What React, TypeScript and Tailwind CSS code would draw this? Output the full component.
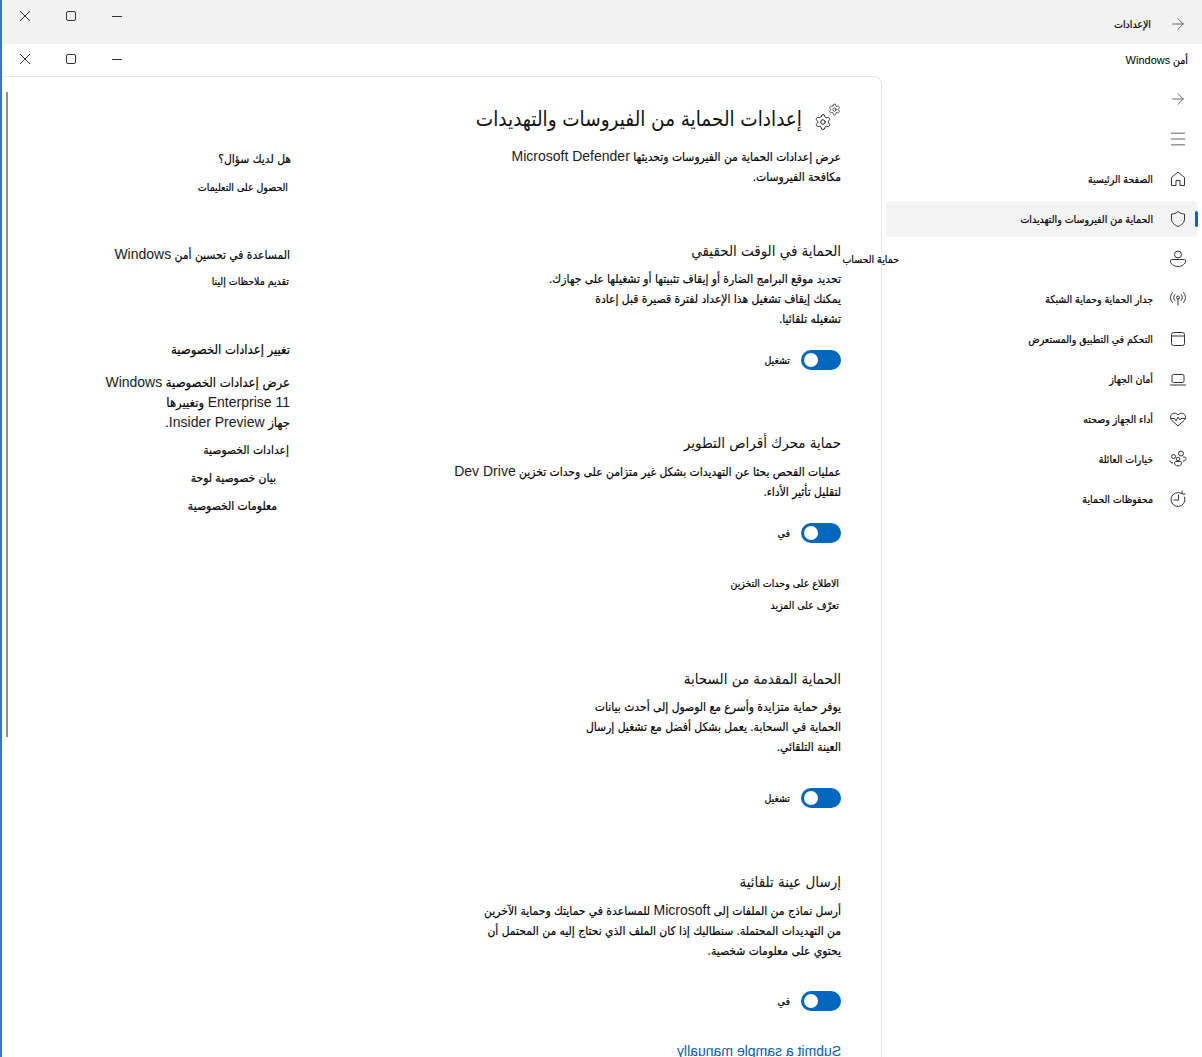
import React, { ReactNode } from 'react';
import { ArrowRight, Menu, Settings } from 'lucide-react';

const sans = 'font-["Liberation_Sans","DejaVu_Sans_Condensed",sans-serif]';
const small = 'text-[10.5px] leading-5 text-black [-webkit-text-stroke:0.2px_black]';

function WindowControls({ height }: { height: string }) {
  return (
    <div className={`mr-auto flex items-center text-[#333] ${height}`}>
      <svg width="46" height="12" viewBox="0 0 46 12" fill="none" stroke="currentColor">
        <path d="M18 6.500h10" />
      </svg>
      <svg width="46" height="12" viewBox="0 0 46 12" fill="none" stroke="currentColor">
        <rect x="18.500" y="1.500" width="9" height="9" rx="1.500" />
      </svg>
      <svg width="46" height="12" viewBox="0 0 46 12" fill="none" stroke="currentColor">
        <path d="M18 1l10 10M28 1L18 11" />
      </svg>
    </div>
  );
}

const icon = { width: 18, height: 18, viewBox: '0 0 18 18', fill: 'none', stroke: 'currentColor', strokeWidth: 1 };

const HomeIcon = () => (
  <svg {...icon}>
    <path d="M2.500 15.500V7.500L9 2l6.500 5.500v8h-4.500V10.500H7v5z" strokeLinejoin="round" />
  </svg>
);
const ShieldIcon = () => (
  <svg {...icon}>
    <path d="M9 1.500c2 1.700 4 2.500 6.500 2.500v5c0 3.500-2.500 5.800-6.500 7.500-4-1.700-6.500-4-6.500-7.500V4C5 4 7 3.200 9 1.500z" strokeLinejoin="round" />
  </svg>
);
const PersonIcon = () => (
  <svg {...icon}>
    <circle cx="9" cy="4.500" r="3.500" />
    <path d="M2.500 9.500h13c.6 0 1 .4 1 1v.5c0 3-3.500 5.500-7.500 5.500s-7.500-2.500-7.500-5.500v-.5c0-.6.4-1 1-1z" strokeLinejoin="round" />
  </svg>
);
const AntennaIcon = () => (
  <svg {...icon}>
    <circle cx="9" cy="7.500" r="1.500" />
    <path d="M9 9v6M5.800 4.500c-1.500 1.800-1.500 4.200 0 6M12.200 4.500c1.500 1.800 1.500 4.200 0 6M3.500 2.500c-2.700 3-2.700 7 0 10M14.500 2.500c2.700 3 2.700 7 0 10" strokeLinecap="round" />
  </svg>
);
const BrowserIcon = () => (
  <svg {...icon}>
    <rect x="2.500" y="2.500" width="13" height="13" rx="2" />
    <path d="M2.500 6h13" />
  </svg>
);
const LaptopIcon = () => (
  <svg {...icon}>
    <rect x="3" y="4.500" width="12" height="8" rx="1.500" />
    <path d="M1.500 15h15" strokeLinecap="round" />
  </svg>
);
const HeartIcon = () => (
  <svg {...icon}>
    <path d="M3 10.500C1 8.500 1 5.500 3 4c2-1.500 4.500-1 6 1 1.500-2 4-2.500 6-1 2 1.500 2 4.500 0 6.500L9 16z" strokeLinejoin="round" />
    <path d="M1.500 8.500h4l1.500 2.500 2-4 2 3 1-1.500h4.500" strokeLinejoin="round" />
  </svg>
);
const FamilyIcon = () => (
  <svg {...icon}>
    <circle cx="12" cy="3.500" r="2.500" />
    <circle cx="4.500" cy="6.500" r="2" />
    <circle cx="9" cy="9" r="1.800" />
    <path d="M14 7h1.500c1 0 1.500.7 1.500 1.500 0 1.500-1.200 2.500-3 2.500M1 10.500c0 1.500 1.200 2.500 3 2.500M5.500 13c0-.8.700-1.500 1.500-1.500h4c.8 0 1.500.7 1.500 1.500 0 1.700-1.500 3-3.500 3s-3.500-1.300-3.500-3z" />
  </svg>
);
const HistoryIcon = () => (
  <svg {...icon}>
    <path d="M12.500 3.400A7 7 0 1 0 15.600 7.100" strokeLinecap="round" />
    <path d="M13 1v3h3" strokeLinecap="round" strokeLinejoin="round" />
    <path d="M9.500 5v5H5" strokeLinecap="round" strokeLinejoin="round" />
  </svg>
);

function NavItem({ glyph, label, selected, textGap }: { glyph: ReactNode; label: string; selected?: boolean; textGap?: string }) {
  return (
    <div className={`relative flex h-9 items-center rounded pr-[10px] ${selected ? 'bg-[#f3f3f3]' : ''}`}>
      <span className="w-[18px] shrink-0 text-[#333]">{glyph}</span>
      <span className={`whitespace-nowrap ${small} ${textGap ?? 'mr-4'}`}>{label}</span>
      {selected && <span className="absolute -right-px top-[10px] h-4 w-[3px] rounded-full bg-[#0067c0]" />}
    </div>
  );
}

function Toggle({ label, className }: { label: string; className: string }) {
  return (
    <div className={`flex items-center ${className}`}>
      <span className="flex h-5 w-10 items-center justify-end rounded-full bg-[#0067c0] px-[3px]">
        <span className="h-[14px] w-[14px] rounded-full bg-white" />
      </span>
      <span className={`mr-[11px] ${small}`}>{label}</span>
    </div>
  );
}

function SectionTitle({ children, className }: { children: ReactNode; className: string }) {
  return <h2 className={`text-[15px] leading-7 whitespace-nowrap text-[#111] ${className}`}>{children}</h2>;
}

function Body({ children, className, size = 'text-xs' }: { children: ReactNode; className: string; size?: string }) {
  return <p className={`${size} leading-5 whitespace-nowrap text-black [-webkit-text-stroke:0.15px_black] ${className}`}>{children}</p>;
}

function Latin({ children }: { children: ReactNode }) {
  return <span className="text-[14px] leading-none text-[#1a1a1a] [-webkit-text-stroke:0]">{children}</span>;
}

export default function App() {
  return (
    <div dir="rtl" className={`${sans} relative flex h-[1057px] w-[1202px] flex-col overflow-hidden border-l-2 border-[#3f74b5] bg-white`}>
      <div className="flex h-[44px] shrink-0 bg-[#f2f2f2]">
        <div className="flex h-[44px] items-center pt-1 pr-[15px] text-[#555]">
          <ArrowRight size={18} strokeWidth={1.2} />
          <span className={`mr-[18px] ${small}`}>الإعدادات</span>
        </div>
        <WindowControls height="h-8" />
      </div>
      <div className="flex h-8 shrink-0 bg-white">
        <div className={`flex h-8 items-center pr-[14px] ${small}`}>
          <span>أمن <span className="text-[11px] leading-none [-webkit-text-stroke:0]">Windows</span></span>
        </div>
        <WindowControls height="h-[30px]" />
      </div>

      <div className="flex min-h-0 flex-1">
        <nav className="relative z-10 flex w-[320px] shrink-0 flex-col gap-1 pt-[5px] pr-[5px] pl-[4px]">
          <div className="flex h-9 items-center pr-[10px] text-[#555]">
            <ArrowRight size={18} strokeWidth={1.2} />
          </div>
          <div className="flex h-9 items-center pr-[9px] text-[#444]">
            <Menu size={20} strokeWidth={1} />
          </div>
          <NavItem glyph={<HomeIcon />} label="الصفحة الرئيسية" />
          <NavItem glyph={<ShieldIcon />} label="الحماية من الفيروسات والتهديدات" selected />
          <NavItem glyph={<PersonIcon />} label="حماية الحساب" textGap="mr-[270px]" />
          <NavItem glyph={<AntennaIcon />} label="جدار الحماية وحماية الشبكة" />
          <NavItem glyph={<BrowserIcon />} label="التحكم في التطبيق والمستعرض" />
          <NavItem glyph={<LaptopIcon />} label="أمان الجهاز" />
          <NavItem glyph={<HeartIcon />} label="أداء الجهاز وصحته" />
          <NavItem glyph={<FamilyIcon />} label="خيارات العائلة" />
          <NavItem glyph={<HistoryIcon />} label="محفوظات الحماية" />
        </nav>

        <main className="flex min-w-0 flex-1 gap-[150px] overflow-hidden rounded-tr-lg border-t border-r border-[#e8e8e8] pr-[40px]">
          <section className="w-[400px] shrink-0">
            <div className="mt-[26px] flex h-8 items-center whitespace-nowrap">
              <span className="relative h-6 w-[26px] shrink-0 text-[#222]">
                <Settings size={18} strokeWidth={1.3} className="absolute bottom-0 -left-px" />
                <Settings size={13} strokeWidth={1.4} className="absolute -top-1 right-0" />
              </span>
              <h1 className="mr-[13px] text-[20.5px] text-[#111]">إعدادات الحماية من الفيروسات والتهديدات</h1>
            </div>
            <Body className="mt-3">
              عرض إعدادات الحماية من الفيروسات وتحديثها <Latin>Microsoft Defender</Latin>
              <br />
              مكافحة الفيروسات.
            </Body>

            <SectionTitle className="mt-[50px]">الحماية في الوقت الحقيقي</SectionTitle>
            <Body className="mt-1">
              تحديد موقع البرامج الضارة أو إيقاف تثبيتها أو تشغيلها على جهازك.
              <br />
              يمكنك إيقاف تشغيل هذا الإعداد لفترة قصيرة قبل إعادة
              <br />
              تشغيله تلقائيا.
            </Body>
            <Toggle label="تشغيل" className="mt-[21px]" />

            <SectionTitle className="mt-[59px]">حماية محرك أقراص التطوير</SectionTitle>
            <Body className="mt-[5px]">
              عمليات الفحص بحثا عن التهديدات بشكل غير متزامن على وحدات تخزين <Latin>Dev Drive</Latin>
              <br />
              لتقليل تأثير الأداء.
            </Body>
            <Toggle label="في" className="mt-[21px]" />
            <p className={`mt-[30px] mr-[2px] ${small}`}>الاطلاع على وحدات التخزين</p>
            <p className={`mt-[2px] mr-[2px] ${small}`}>تعرّف على المزيد</p>

            <SectionTitle className="mt-[50px]">الحماية المقدمة من السحابة</SectionTitle>
            <Body className="mt-1">
              يوفر حماية متزايدة وأسرع مع الوصول إلى أحدث بيانات
              <br />
              الحماية في السحابة. يعمل بشكل أفضل مع تشغيل إرسال
              <br />
              العينة التلقائي.
            </Body>
            <Toggle label="تشغيل" className="mt-[31px]" />

            <SectionTitle className="mt-[60px]">إرسال عينة تلقائية</SectionTitle>
            <Body className="mt-[5px]">
              أرسل نماذج من الملفات إلى <Latin>Microsoft</Latin> للمساعدة في حمايتك وحماية الآخرين
              <br />
              من التهديدات المحتملة. سنطالبك إذا كان الملف الذي نحتاج إليه من المحتمل أن
              <br />
              يحتوي على معلومات شخصية.
            </Body>
            <Toggle label="في" className="mt-[30px]" />
            <p dir="ltr" className="mt-[30px] w-fit -scale-x-100 text-sm leading-5 text-[#0b5cad]">Submit a sample manually</p>
          </section>

          <aside className="shrink-0 whitespace-nowrap text-black">
            <Body className="mt-[72px]">هل لديك سؤال؟</Body>
            <p className={`mt-2 mr-[3px] ${small}`}>الحصول على التعليمات</p>
            <Body className="mt-[48px] mr-px">المساعدة في تحسين أمن <Latin>Windows</Latin></Body>
            <p className={`mt-[6px] mr-[2px] ${small}`}>تقديم ملاحظات إلينا</p>
            <Body size="text-[13px]" className="mt-[49px] mr-px">تغيير إعدادات الخصوصية</Body>
            <Body size="text-[13px]" className="mt-[13px] mr-px">
              عرض إعدادات الخصوصية <Latin>Windows</Latin>
              <br />
              <Latin>11 Enterprise</Latin> وتغييرها
              <br />
              جهاز <Latin>Insider Preview</Latin>.
            </Body>
            <Body className="mt-[7px] mr-[2px]">إعدادات الخصوصية</Body>
            <p className="mt-2 mr-[15px] text-xs leading-5 text-black [-webkit-text-stroke:0.2px_black]">بيان خصوصية لوحة</p>
            <p className="mt-2 mr-[14px] text-xs leading-5 text-black [-webkit-text-stroke:0.2px_black]">معلومات الخصوصية</p>
          </aside>
        </main>
      </div>

      <div className="absolute top-[92px] left-[4px] h-[645px] w-[2px] bg-[#8f8f8f]" />
    </div>
  );
}
